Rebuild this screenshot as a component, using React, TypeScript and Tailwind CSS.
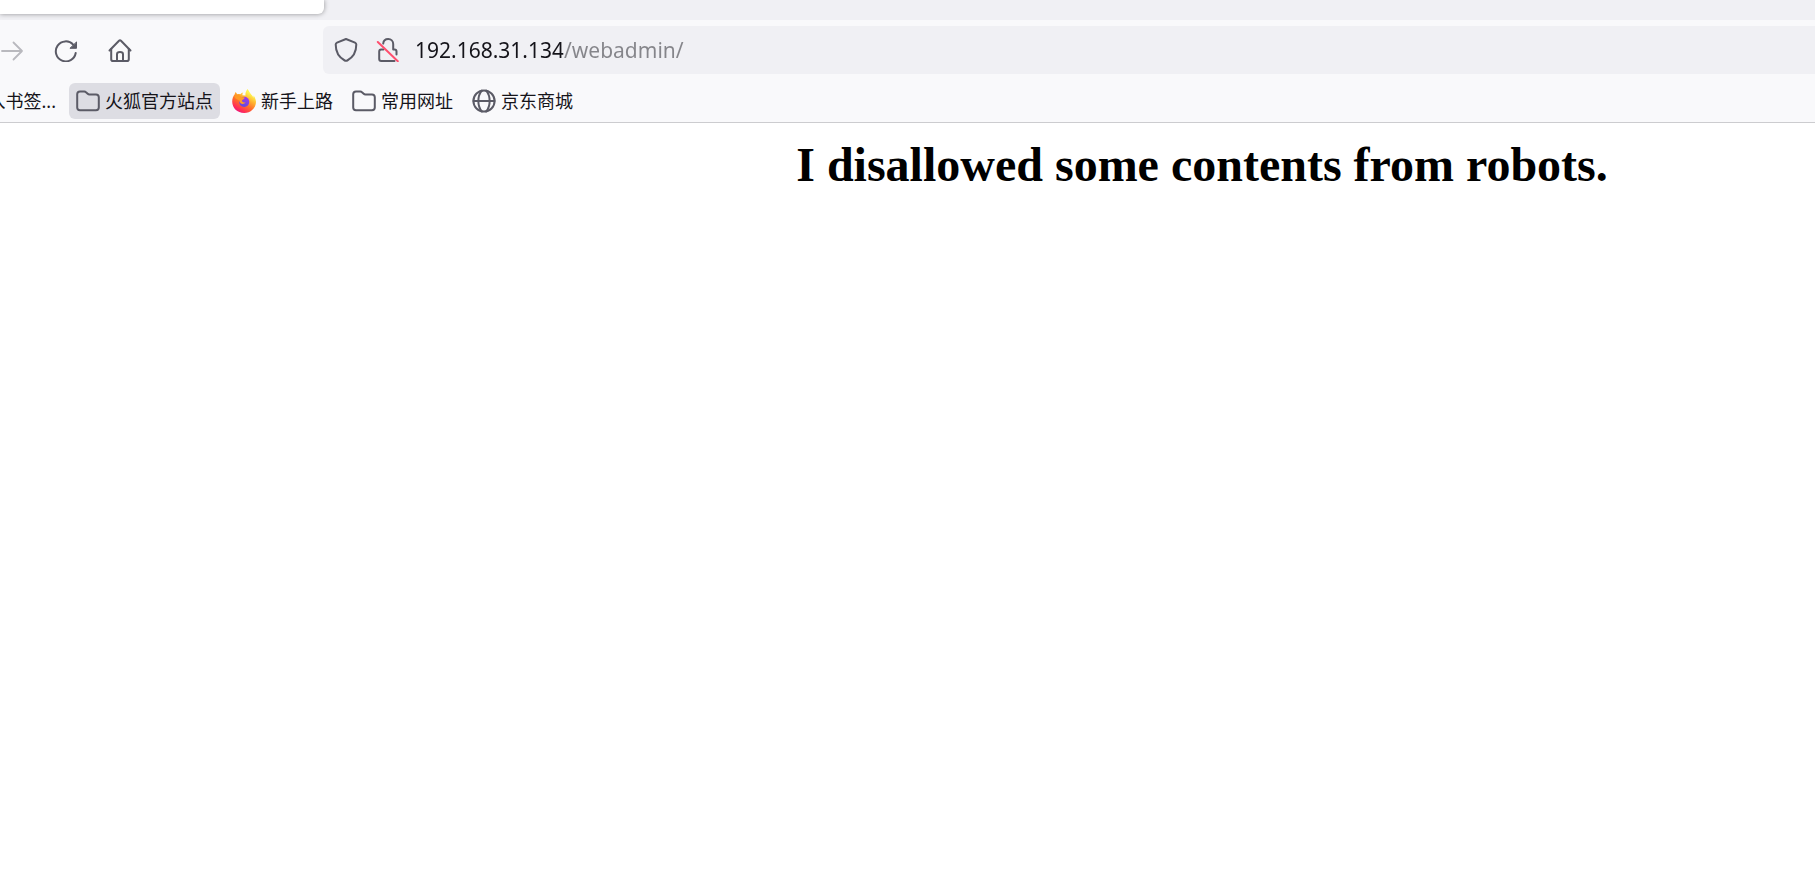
import { useState, type ReactNode } from "react";

const iconProps = {
  width: 24,
  height: 24,
  viewBox: "0 0 24 24",
  fill: "none",
  stroke: "currentColor",
  strokeWidth: 2,
  strokeLinecap: "round" as const,
  strokeLinejoin: "round" as const,
  "aria-hidden": true,
  className: "shrink-0",
};

function ForwardIcon() {
  return (
    <svg {...iconProps} strokeWidth={1.8}>
      <path d="M2 13H22M13.500 4.500L22 13L13.500 21.500" />
    </svg>
  );
}

function ReloadIcon() {
  return (
    <svg {...iconProps}>
      <path d="M21.700 15A10 10 0 1 1 19.200 6.600" />
      <path d="M22.500 4.300V10.300H16.300Z" fill="currentColor" strokeWidth={1} />
    </svg>
  );
}

function HomeIcon() {
  return (
    <svg {...iconProps}>
      <path d="M1.500 12.500L11 2.700Q12 1.700 13 2.700L22.500 12.500" />
      <path d="M3.200 11V21.200Q3.200 23 5 23H19Q20.800 23 20.800 21.200V11" />
      <path d="M9 22.700V16.300Q9 14 12 14Q15 14 15 16.300V22.700" />
    </svg>
  );
}

function ShieldIcon() {
  return (
    <svg {...iconProps}>
      <path d="M12 1L21 4.600Q22.300 5.200 22.300 6.600C22.300 14 19.500 19.200 13.300 22.500Q12 23.200 10.700 22.500C4.500 19.200 1.700 14 1.700 6.600Q1.700 5.200 3 4.600Z" />
    </svg>
  );
}

function InsecureIcon() {
  return (
    <svg {...iconProps}>
      <path d="M7.200 5.600C7.500 2.600 9.700 1 12.200 1C15 1 17.200 3.200 17.200 6V11.500H18.500Q20.500 11.500 20.500 13.500V16.500" />
      <path d="M7.500 11.500H5.200Q3.200 11.500 3.200 13.500V21Q3.200 23 5.200 23H18.500" />
      <path d="M1.800 4L21.800 23.200" stroke="#ff4f6e" strokeWidth={2} />
    </svg>
  );
}

function FolderIcon() {
  return (
    <svg {...iconProps}>
      <path d="M4 2.500H8.300Q9.300 2.500 10 3.200L11.700 4.800Q12.400 5.500 13.400 5.500H20Q22.800 5.500 22.800 8.300V18.500Q22.800 21.200 20 21.200H4Q1.200 21.200 1.200 18.500V5.300Q1.200 2.500 4 2.500Z" />
    </svg>
  );
}

function GlobeIcon() {
  return (
    <svg {...iconProps}>
      <circle cx="12" cy="12" r="10.600" />
      <path d="M1.500 12H22.500M9.800 1.600C5.200 7 5.200 17 9.800 22.400M14.200 1.600C18.800 7 18.800 17 14.200 22.400" />
    </svg>
  );
}

function FirefoxIcon() {
  return (
    <svg width="24" height="24" viewBox="0 0 24 24" aria-hidden="true" className="shrink-0">
      <defs>
        <linearGradient id="fox" x1="0.800" y1="0.100" x2="0.250" y2="1">
          <stop offset="0.100" stopColor="#fff44f" />
          <stop offset="0.350" stopColor="#ffb02e" />
          <stop offset="0.600" stopColor="#ff6a2b" />
          <stop offset="0.850" stopColor="#ff2a5a" />
          <stop offset="1" stopColor="#e31587" />
        </linearGradient>
        <linearGradient id="orb" x1="0.700" y1="0" x2="0.300" y2="1">
          <stop offset="0" stopColor="#a13de8" />
          <stop offset="1" stopColor="#5a4be0" />
        </linearGradient>
      </defs>
      <path
        d="M15.500 0C17.200 2 17.300 3.700 19.200 5.400C20.300 6.400 21 7.500 21.300 8.700C21.600 8 21.600 7.200 21.500 6.500C23.200 8.500 24 11 24 13C23.700 19.300 18.700 24 12.200 24C5.200 24 0.200 19 0.200 12.500C0.200 9.500 1.200 7 2.700 5.200C2.800 4.200 3.200 3.500 3.700 3L5.200 5.300C6.300 5 7.300 5 8.300 5.300C9 4.200 10.200 3.600 11.300 3.400C10.400 4.500 10.300 5.400 10.500 6.200L13.500 6.500C13.200 4 14 1.700 15.500 0Z"
        fill="url(#fox)"
      />
      <circle cx="12.200" cy="12.800" r="5.100" fill="url(#orb)" />
      <path
        d="M2.700 7.500C4.200 5.200 7.500 5.200 8.500 7.300C9.700 8.500 11.500 8 12.800 8.800C12.600 10.200 10.600 10.400 10 11.600C9.800 13 11.500 14 13.600 13.200C12 16 7.500 15.200 7.200 11.500C5.500 10 3.500 10.500 2.700 7.500Z"
        fill="#ff9a24"
      />
    </svg>
  );
}

function ToolbarButton({ label, disabled, children }: { label: string; disabled?: boolean; children: ReactNode }) {
  return (
    <button type="button" aria-label={label} disabled={disabled} className="text-[#5b5b66] disabled:text-[#b9b9be]">
      {children}
    </button>
  );
}

function Bookmark({ label, icon, active }: { label: string; icon: ReactNode; active?: boolean }) {
  return (
    <button
      type="button"
      className={
        active
          ? "flex h-9 shrink-0 items-center gap-[5px] rounded-md bg-[#dddde3] px-[7px]"
          : "flex h-9 shrink-0 items-center gap-[5px] rounded-md px-[7px]"
      }
    >
      <span className="text-[#5b5b66]">{icon}</span>
      <span>{label}</span>
    </button>
  );
}

export default function App() {
  const [url, setUrl] = useState("192.168.31.134/webadmin/");

  return (
    <div className="min-h-screen bg-white">
      <header className="border-b border-[#cccccf] bg-[#f9f9fb] font-['Noto_Sans','Noto_Sans_CJK_SC',sans-serif] text-[#15141a]">
        <div className="h-5 overflow-hidden bg-[#f0f0f4]">
          <div className="h-3.5 w-[324px] rounded-br-md bg-white shadow-[0_0_5px_rgba(0,0,0,0.4)]" />
        </div>

        <nav aria-label="导航" className="flex items-center pt-1.5">
          <div className="flex w-[323px] shrink-0 items-center gap-[30px]">
            <ToolbarButton label="前进" disabled>
              <ForwardIcon />
            </ToolbarButton>
            <ToolbarButton label="刷新">
              <ReloadIcon />
            </ToolbarButton>
            <ToolbarButton label="主页">
              <HomeIcon />
            </ToolbarButton>
          </div>
          <div className="flex h-12 flex-1 items-center rounded-l-md bg-[#f0f0f4] pl-[11px] text-[#5b5b66]">
            <div className="flex shrink-0 gap-[18px]">
              <ShieldIcon />
              <InsecureIcon />
            </div>
            <input
              type="text"
              aria-label="网址"
              value={url}
              onChange={(e) => setUrl(e.target.value)}
              className="ml-[15px] h-10 min-w-0 flex-1 bg-linear-to-r from-[#15141a] from-[148px] to-[#85858a] to-[148px] bg-clip-text text-[21px] text-transparent caret-[#15141a] outline-none"
            />
          </div>
        </nav>

        <div className="flex items-center gap-[5px] overflow-hidden pt-[9px] pb-[3px] text-[18px] leading-6">
          <div className="flex w-16 shrink-0 justify-end pr-2">
            <button type="button" className="h-9 shrink-0 whitespace-nowrap">
              入书签...
            </button>
          </div>
          <Bookmark label="火狐官方站点" icon={<FolderIcon />} active />
          <Bookmark label="新手上路" icon={<FirefoxIcon />} />
          <Bookmark label="常用网址" icon={<FolderIcon />} />
          <Bookmark label="京东商城" icon={<GlobeIcon />} />
        </div>
      </header>

      <main className="pt-3.5 pl-[589px] text-center">
        <h1 className="font-['Liberation_Serif',serif] text-[48px] leading-[56px] font-bold text-black">
          I disallowed some contents from robots.
        </h1>
      </main>
    </div>
  );
}
